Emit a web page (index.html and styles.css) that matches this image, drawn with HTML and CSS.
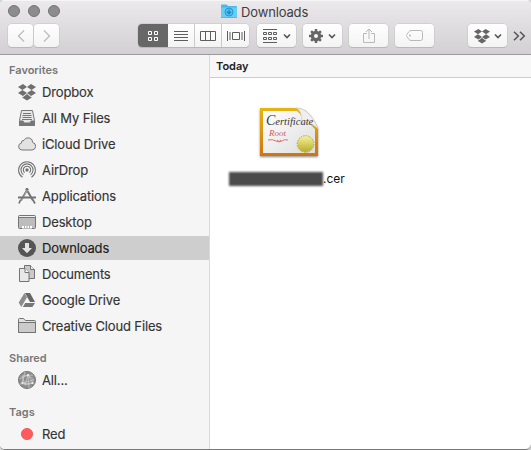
FILE: index.html
```html
<!DOCTYPE html>
<html lang="en">
<head>
<meta charset="utf-8">
<title>Downloads</title>
<link rel="stylesheet" href="styles.css">
</head>
<body>
<svg class="defs" width="0" height="0">
  <symbol id="dropbox" viewBox="0 0 18 18"><path d="M5 1 9 4 4.400 7 0 4ZM13 1 9 4l4.600 3L18 4ZM0 10l4.400-3L9 10l-4 3ZM18 10l-4.400-3L9 10l4 3ZM4.500 13.700l.7.400L9 11.100l3.800 3 .7-.4v1L9 17.500l-4.500-2.800Z"/></symbol>
  <symbol id="down" viewBox="0 0 8 6"><path d="m1 1.500 3 3 3-3" fill="none" stroke="currentColor" stroke-width="1.600"/></symbol>
</svg>
<div class="window">
  <header class="bar">
    <div class="titlebar">
      <div class="lights"><i></i><i></i><i></i></div>
      <div class="title">
        <svg width="16" height="16" viewBox="0 0 16 16"><path d="M0 2.500Q0 1.500 1 1.500h4.500L7 3h8q1 0 1 1v10H0Z" fill="#4bb9e8"/><path d="M0 4.500h16V14H0Z" fill="#67cdf5"/><path d="M0 14.500h16" stroke="#78a9bd"/><circle cx="8" cy="9" r="4" fill="#59bff0" stroke="#2398d3"/><path d="M8 6.500v4M6 8.800l2 2 2-2" fill="none" stroke="#168bc8" stroke-width="1.300"/></svg>
        <span>Downloads</span>
      </div>
    </div>
    <div class="tools">
      <div class="btn nav"><svg width="8" height="14" viewBox="0 0 8 14"><path d="M7 1.500 1.500 7 7 12.500" fill="none" stroke="#bcbcbc" stroke-width="1.300"/></svg></div>
      <div class="btn nav fwd"><svg width="8" height="14" viewBox="0 0 8 14"><path d="M1 1.500 6.500 7 1 12.500" fill="none" stroke="#bcbcbc" stroke-width="1.300"/></svg></div>
      <div class="btn views">
        <span class="seg on"><svg width="12" height="12" viewBox="0 0 12 12"><path d="M1.500 1.500h3v3h-3ZM7.500 1.500h3v3h-3ZM1.500 7.500h3v3h-3ZM7.500 7.500h3v3h-3Z" fill="none" stroke="#fff"/></svg></span>
        <span class="seg"><svg width="14" height="12" viewBox="0 0 14 12"><path d="M0 1.500h14M0 4.500h14M0 7.500h14M0 10.500h14" stroke="#5d5d5d"/></svg></span>
        <span class="seg"><svg width="16" height="12" viewBox="0 0 16 12"><path d="M.5 1.500h15v9H.5ZM5.500 1.500v9M10.500 1.500v9" fill="none" stroke="#5d5d5d"/></svg></span>
        <span class="seg last"><svg width="18" height="12" viewBox="0 0 18 12"><path d="M.5 1v10M3 2v8M5.500 2.500h7v7h-7ZM15 2v8M17.500 1v10" fill="none" stroke="#5d5d5d"/></svg></span>
      </div>
      <div class="btn group"><svg width="14" height="14" viewBox="0 0 14 14"><path d="M0 .5h14M0 13.500h14M.5 3.500h3v2h-3ZM5.500 3.500h3v2h-3ZM10.500 3.500h3v2h-3ZM.5 8.500h3v2h-3ZM5.500 8.500h3v2h-3ZM10.500 8.500h3v2h-3Z" fill="none" stroke="#5d5d5d"/></svg><svg class="chev" width="8" height="6"><use href="#down"/></svg></div>
      <div class="btn gear"><svg width="14" height="14" viewBox="-7 -7 14 14"><circle r="3.600" fill="none" stroke="#666" stroke-width="3.200"/><path d="M0-7V-4M0 7V4M-7 0h3M7 0H4M-4.900-4.900l2 2M4.900 4.900l-2-2M-4.900 4.900l2-2M4.900-4.900l-2 2" stroke="#666" stroke-width="2.500"/></svg><svg class="chev" width="8" height="6"><use href="#down"/></svg></div>
      <div class="btn share"><svg width="12" height="16" viewBox="0 0 12 16"><path d="M4 5.500H.5v9h11v-9H8M6 11V1.500M3 4l3-3 3 3" fill="none" stroke="#b9b9b9"/></svg></div>
      <div class="btn tag"><svg width="17" height="11" viewBox="0 0 17 11"><path d="M5 .5h9.500q2 0 2 2v6q0 2-2 2H5Q3.800 10.500 3 9.500L.8 6.500Q.2 5.500.8 4.500L3 1.500Q3.800.5 5 .5Z" fill="none" stroke="#b9b9b9"/><circle cx="4" cy="5.500" r="1" fill="#b9b9b9"/></svg></div>
      <div class="btn drop"><svg width="16" height="16" fill="#666"><use href="#dropbox"/></svg><svg class="chev" width="8" height="6"><use href="#down"/></svg></div>
      <svg class="more" width="13" height="10" viewBox="0 0 13 10"><path d="m1 .7 4.300 4.300L1 9.300M7 .7 11.300 5 7 9.300" fill="none" stroke="#555" stroke-width="1.500"/></svg>
    </div>
  </header>
  <main class="content">
    <nav class="sidebar">
      <h2>Favorites</h2>
      <ul>
        <li><svg width="18" height="18" fill="#6f6f6f"><use href="#dropbox"/></svg><span>Dropbox</span></li>
        <li><svg width="18" height="18" viewBox="0 0 18 18"><path d="M3.500 1.500h11l2 10v5h-15v-5Z" fill="#e8e8e8" stroke="#777"/><path d="M5 4.500h8M4.500 6.500h9M4.500 8.500h9M4 10.500h10" stroke="#777"/><path d="M1.500 12H5l1 2h6l1-2h3.500v4.500h-15Z" fill="#777" stroke="#777"/></svg><span>All My Files</span></li>
        <li><svg width="18" height="18" viewBox="0 0 18 18"><path d="M4 15a3.500 3.500 0 0 1-.7-6.900 2.700 2.700 0 0 1 2.700-2.800 4.600 4.600 0 0 1 8.700 2.200A3.800 3.800 0 0 1 14 15Z" fill="#e2e2e2" stroke="#777"/></svg><span>iCloud Drive</span></li>
        <li><svg width="18" height="18" viewBox="0 0 18 18"><g fill="none" stroke="#737373" stroke-width="1.100"><path d="M4.500 16.300a8.400 8.400 0 1 1 9 0M5.400 13.700a6 6 0 1 1 7.200 0M6.600 11.700a3.700 3.700 0 1 1 4.800 0"/></g><circle cx="9" cy="9" r="1.700" fill="#737373"/></svg><span>AirDrop</span></li>
        <li><svg width="18" height="18" viewBox="0 0 18 18"><path d="m10 1.500-7 12M8 1.500l7 12" fill="none" stroke="#737373" stroke-width="2"/><path d="m9.500 3-6 10.300" stroke="#ddd" stroke-width=".6"/><path d="M0 10.500h18" stroke="#737373" stroke-width="2.200"/><path d="M2.500 13 1 16.500M15 13l2 3.500" stroke="#737373" stroke-width="1.700"/></svg><span>Applications</span></li>
        <li><svg width="18" height="18" viewBox="0 0 18 18"><rect x=".5" y="2.500" width="17" height="13" rx="1" fill="#bdbdbd" stroke="#747474"/><path d="M1 3.500h16" stroke="#f1f1f1"/><path d="M1 4.500h16" stroke="#777"/><path d="M4 13h10v2.500H4Z" fill="#fff"/><path d="M6.500 13v2M9 13v2M11.500 13v2" stroke="#888" stroke-width=".7"/></svg><span>Desktop</span></li>
        <li class="selected"><svg width="18" height="18" viewBox="0 0 18 18"><circle cx="9" cy="9" r="9" fill="#555"/><path d="M7 4h4v5h3l-5 5.300L4 9h3Z" fill="#e2e2e2"/></svg><span>Downloads</span></li>
        <li><svg width="18" height="18" viewBox="0 0 18 18"><path d="M6.500.5h6l4 4v9h-10Z" fill="#c9c9c9" stroke="#737373"/><path d="M12.500.5v4h4" fill="#eee" stroke="#737373"/><path d="M1.500 3.500H7l4 4v9h-9.500Z" fill="#e8e8e8" stroke="#737373"/><path d="M7 3.500v4h4" fill="#fff" stroke="#737373"/></svg><span>Documents</span></li>
        <li><svg width="18" height="18" viewBox="0 0 18 18"><path d="m6.500 2-5.800 9.500L3.300 16 9 6.300Z" fill="#8c8c8c"/><path d="M7 2h5l5 9h-5Z" fill="#666"/><path d="M7.200 12H17l-2.600 4H4.900Z" fill="#777"/></svg><span>Google Drive</span></li>
        <li><svg width="18" height="18" viewBox="0 0 18 18"><path d="M.5 15.500v-13q0-1 1-1H5q1 0 1.500 1t1.500 1h8.500q1 0 1 1v11Z" fill="#e0e0e0" stroke="#737373"/><path d="M.5 5.500h17v10H.5Z" fill="#cbcbcb" stroke="#737373"/></svg><span>Creative Cloud Files</span></li>
      </ul>
      <h2>Shared</h2>
      <ul>
        <li><svg width="18" height="18" viewBox="0 0 18 18"><circle cx="9" cy="9" r="8.500" fill="#8e8e8e" stroke="#777"/><path d="M1 8 10 4l5 8-8 2L4 5l11-1M7 14l3-10 1 13M2 13l13-1M10 4l6 5-12 3L7 1" fill="none" stroke="#dedede" stroke-width=".6"/><g fill="#eee"><circle cx="10" cy="4" r="1.100"/><circle cx="4.500" cy="12" r="1.100"/><circle cx="14.500" cy="12" r="1.100"/></g></svg><span>All...</span></li>
      </ul>
      <h2>Tags</h2>
      <ul>
        <li><svg width="18" height="18" viewBox="0 0 18 18"><circle cx="9" cy="9" r="5.600" fill="#ff5b5d" stroke="#f34b50" stroke-width=".8"/></svg><span>Red</span></li>
      </ul>
    </nav>
    <section class="files">
      <h1>Today</h1>
      <div class="file">
        <svg width="64" height="56" viewBox="0 0 64 56">
          <defs><linearGradient id="gold" x2="0" y2="1"><stop stop-color="#e7b510"/><stop offset="1" stop-color="#cf7410"/></linearGradient><linearGradient id="paper" x2="1" y2="1"><stop stop-color="#fff"/><stop offset="1" stop-color="#dedede"/></linearGradient><linearGradient id="seal" x2="0" y2="1"><stop stop-color="#f5f19b"/><stop offset="1" stop-color="#b7ad26"/></linearGradient></defs>
          <path class="sheet" d="M3 3h38q7 1 12 7t8 13v28H3Z" fill="url(#gold)"/>
          <path d="M6 6h34l18 18v24H6Z" fill="url(#paper)"/>
          <path d="M39 3q6 2 6 15 10-1 16 6Q59 17 53 10T39 3Z" fill="#efefef" stroke="#c8c8c8" stroke-width=".6"/>
          <text class="cert" x="9" y="20"><tspan class="cap">C</tspan>ertificate</text>
          <text class="root" x="12" y="31">Root</text>
          <path d="M11 35q5-1 8 1 3 2 5-1m7 0q-4-1-6 1-3 2-5-1" fill="none" stroke="#d57575"/>
          <circle cx="48.500" cy="39" r="8" fill="url(#seal)"/><circle cx="48.500" cy="39" r="8.300" fill="none" stroke="#aaa12d" stroke-width="1" stroke-dasharray="1.500 1.100"/>
        </svg>
        <div class="name"><i class="redacted"></i><span>.cer</span></div>
      </div>
      <svg class="grip" width="5" height="5" viewBox="0 0 5 5"><path d="M5 0v5H0Q4 4 5 0Z" fill="#aaa"/></svg>
    </section>
  </main>
</div>
</body>
</html>
```
FILE: styles.css
```css
* { box-sizing: border-box; }
html { background: #d3d3d3; }
body { margin: 0; font: 13px/16px Inter, "Liberation Sans", sans-serif; color: #343434; }
svg { display: block; flex: none; }
.defs { position: absolute; }
.window { display: flex; flex-direction: column; width: 531px; height: 450px; overflow: hidden; border-radius: 5px; border-bottom: 1px solid #777; background: #fff; }
.bar { height: 55px; background: linear-gradient(#ebe9eb, #d2d0d2); border-top: 1px solid #f7f6f7; border-bottom: 1px solid #9c9b9c; }
.titlebar { display: flex; height: 23px; }
.lights { display: flex; gap: 8px; padding: 4px 0 0 8px; width: 221px; }
.lights i { width: 12px; height: 12px; border-radius: 50%; background: #8c8b8e; border: 1px solid #747376; }
.title { display: flex; gap: 4px; padding-top: 2px; color: #3f3d3f; }
.title span { letter-spacing: -.15px; line-height: 18px; }
.tools { display: flex; padding-left: 8px; color: #555; }
.btn { display: flex; align-items: center; justify-content: center; width: 39px; height: 23px; border-radius: 4px; background: linear-gradient(#fff, #f3f3f3); box-shadow: 0 0 0 .5px #c4c4c4, 0 1px 0 #b0afb0; }
.nav { width: 25px; }
.fwd { margin-left: 1px; }
.views { width: 111px; margin-left: 79px; overflow: hidden; }
.seg { display: flex; align-items: center; justify-content: center; width: 27px; height: 100%; border-right: 1px solid #cacaca; }
.on { width: 30px; background: #676767; border-color: #676767; }
.last { border: 0; }
.group { margin-left: 8px; }
.gear, .share, .tag { margin-left: 7px; }
.chev { margin-left: 5px; }
.group .chev { margin-left: 6px; }
.drop { margin-left: 34px; }
.drop .chev { margin-left: 4px; }
.more { margin: 7px 0 0 6px; }
.content { display: flex; flex: 1; min-height: 0; }
.sidebar { width: 210px; padding-top: 7px; background: #f5f5f5; border-right: 1px solid #d9d9d9; }
.sidebar h2 { margin: 0; padding-left: 9px; font-size: 11px; font-weight: 600; line-height: 16px; color: #777; }
.sidebar ul { display: flex; flex-direction: column; gap: 2px; margin: 2px 0 12px; padding: 0; list-style: none; }
.sidebar li { display: flex; align-items: center; gap: 6px; height: 24px; padding-left: 18px; }
.sidebar li span { letter-spacing: -.15px; line-height: 17px; -webkit-text-stroke: .15px; }
.sidebar .selected { background: #cecece; color: #202020; }
.selected span { -webkit-text-stroke: .35px; }
.files { position: relative; flex: 1; background: #fff; }
.files h1 { margin: 0; height: 23px; padding: 3px 0 0 6px; font-size: 11px; line-height: 16px; font-weight: 600; color: #222; background: #f7f7f7; border-bottom: 1px solid #ccc; }
.file { display: flex; flex-direction: column; align-items: center; width: 117px; margin: 27px 0 0 18px; }
.file > svg { margin-left: 4px; }
.sheet { filter: drop-shadow(0 1px 1px #888); }
.cert, .root { font-family: "Liberation Serif", serif; font-style: italic; font-size: 10.5px; fill: #383838; }
.cap { font-size: 14px; }
.root { font-size: 9px; fill: #d15d5d; }
.name { display: flex; align-items: center; width: 117px; margin-top: 9px; color: #111; font-size: 12px; line-height: 17px; }
.redacted { width: 94px; height: 14px; margin: 0 0 0 1px; background: #4b4b4b; filter: blur(.8px); }
.grip { position: absolute; right: 0; bottom: 0; }
```
